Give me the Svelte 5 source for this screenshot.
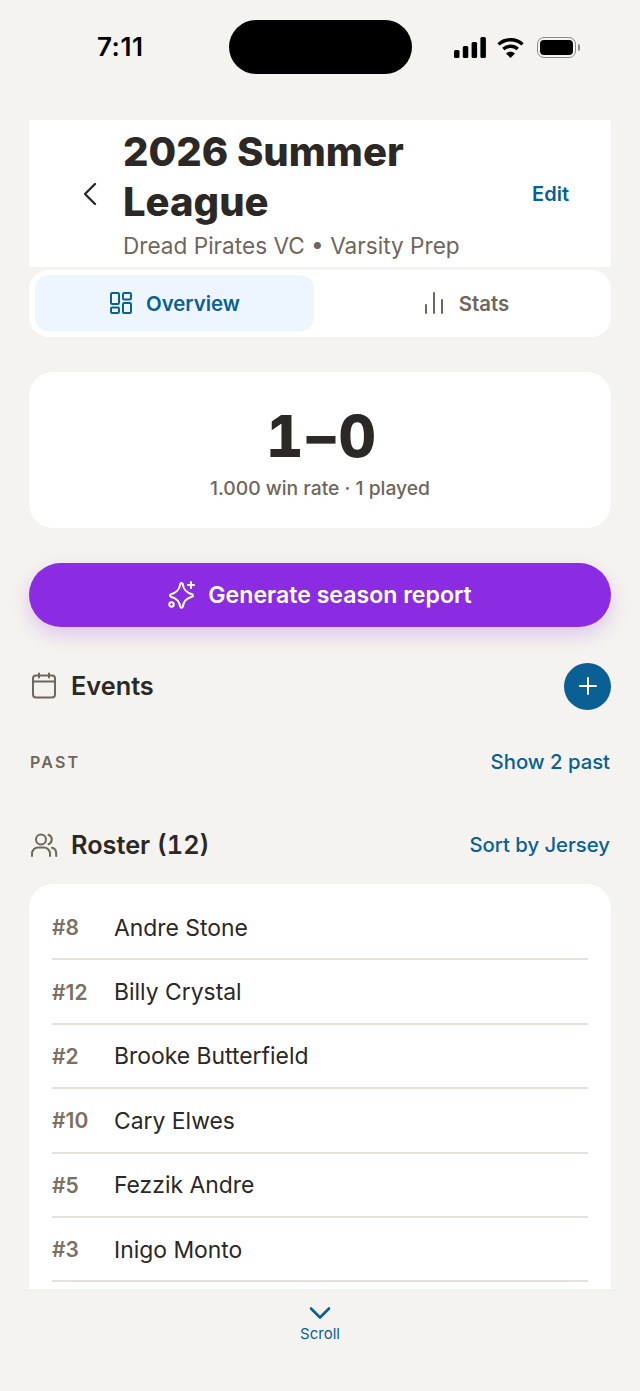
<script lang="ts">
  const roster = [
    { jersey: 8, name: "Andre Stone" },
    { jersey: 12, name: "Billy Crystal" },
    { jersey: 2, name: "Brooke Butterfield" },
    { jersey: 10, name: "Cary Elwes" },
    { jersey: 5, name: "Fezzik Andre" },
    { jersey: 3, name: "Inigo Monto" }
  ];
</script>

<div class="screen">
  <div class="status-bar">
    <span class="time">7:11</span>
    <div class="island"></div>
    <div class="status-icons">
      <svg width="32" height="21" viewBox="0 0 32 21" fill="#000">
        <rect x="0" y="13" width="5.500" height="8" rx="1.500" />
        <rect x="8.800" y="9" width="5.500" height="12" rx="1.500" />
        <rect x="17.600" y="5" width="5.500" height="16" rx="1.500" />
        <rect x="26.400" y="0" width="5.500" height="21" rx="1.500" />
      </svg>
      <svg class="wifi" width="27" height="21" viewBox="0 0 27 21" fill="none" stroke="#000" stroke-width="3.300">
        <path d="M1.500 7.400C8.200 1.200 18.800 1.200 25.500 7.400" />
        <path d="M6.300 12C10.400 8.300 16.600 8.300 20.700 12" />
        <path d="M13.500 21 9 16.400C11.600 14.200 15.400 14.200 18 16.400Z" fill="#000" stroke="none" />
      </svg>
      <div class="battery"><div class="battery-fill"></div></div>
      <div class="battery-cap"></div>
    </div>
  </div>

  <header class="header">
    <svg class="back" width="14" height="24" viewBox="0 0 14 24" fill="none" stroke="#2b2825" stroke-width="2.400" stroke-linecap="round" stroke-linejoin="round">
      <path d="M12 2 2 12l10 10" />
    </svg>
    <div class="header-text">
      <h1>2026 Summer League</h1>
      <p>Dread Pirates VC • Varsity Prep</p>
    </div>
    <span class="edit">Edit</span>
  </header>

  <div class="tabs">
    <div class="tab active">
      <svg width="24" height="24" viewBox="0 0 24 24" fill="none" stroke="currentColor" stroke-width="2" stroke-linejoin="round">
        <rect x="2" y="2" width="8" height="11" rx="1.200" />
        <rect x="14" y="2" width="8" height="6.500" rx="1.200" />
        <rect x="14" y="12" width="8" height="10" rx="1.200" />
        <rect x="2" y="16.500" width="8" height="5.500" rx="1.200" />
      </svg>
      <span>Overview</span>
    </div>
    <div class="tab">
      <svg width="24" height="24" viewBox="0 0 24 24" fill="none" stroke="currentColor" stroke-width="2" stroke-linecap="round">
        <path d="M4 14v8M12 2v20M20 9v13" />
      </svg>
      <span>Stats</span>
    </div>
  </div>

  <section class="score">
    <div class="record">1–0</div>
    <div class="record-sub">1.000 win rate · 1 played</div>
  </section>

  <button class="report" type="button">
    <svg width="28" height="28" viewBox="0 0 28 28" fill="none" stroke="#fff" stroke-width="2.100" stroke-linecap="round" stroke-linejoin="round">
      <path d="M12.300 3.100c.3-1.300 2.100-1.300 2.400 0 1 5.700 3.200 8.400 9.300 10.100 1.200.4 1.200 2.100 0 2.500-6.100 1.700-8.300 4.400-9.300 10.100-.3 1.300-2.100 1.300-2.400 0-1-5.700-3.200-8.400-9.300-10.100-1.200-.4-1.200-2.100 0-2.500 6.100-1.700 8.300-4.400 9.300-10.100Z" />
      <path d="M23 1v6M20 4h6" />
      <circle cx="3.500" cy="23.500" r="2.200" />
    </svg>
    <span>Generate season report</span>
  </button>

  <div class="section-row events">
    <div class="section-title">
      <svg width="28" height="28" viewBox="0 0 28 28" fill="none" stroke="#6f665c" stroke-width="2" stroke-linecap="round" stroke-linejoin="round">
        <rect x="3" y="3.500" width="22" height="22" rx="3" />
        <path d="M3 9.500h22M9 1.500v4M19 1.500v4" />
      </svg>
      <h2>Events</h2>
    </div>
    <button class="add" type="button" aria-label="Add event">
      <svg width="20" height="20" viewBox="0 0 20 20" fill="none" stroke="#fff" stroke-width="2" stroke-linecap="round">
        <path d="M10 2v16M2 10h16" />
      </svg>
    </button>
  </div>

  <div class="section-row past">
    <span class="past-label">PAST</span>
    <span class="link">Show 2 past</span>
  </div>

  <div class="section-row roster-head">
    <div class="section-title">
      <svg width="28" height="28" viewBox="0 0 28 28" fill="none" stroke="#6f665c" stroke-width="2" stroke-linecap="round" stroke-linejoin="round">
        <circle cx="11" cy="8.500" r="5" />
        <path d="M2 25v-2.500c0-3.500 3-6 6-6h6c3 0 6 2.500 6 6V25" />
        <path d="M18.500 3.800a5 5 0 0 1 0 9.400" />
        <path d="M22 16.800c2.500.6 4.200 3 4.200 5.700V25" />
      </svg>
      <h2>Roster (12)</h2>
    </div>
    <span class="link">Sort by Jersey</span>
  </div>

  <div class="roster">
    {#each roster as player}
      <div class="player">
        <span class="jersey">#{player.jersey}</span>
        <span class="name">{player.name}</span>
      </div>
    {/each}
  </div>

  <div class="scroll-hint">
    <svg width="22" height="14" viewBox="0 0 22 14" fill="none" stroke="#0a5f94" stroke-width="2.600" stroke-linecap="round" stroke-linejoin="round">
      <path d="M2 2.500 11 11.500 20 2.500" />
    </svg>
    <span>Scroll</span>
  </div>
</div>

<style>
  :global(body) {
    margin: 0;
    background: #f5f3ef;
  }

  .screen {
    box-sizing: border-box;
    width: 640px;
    height: 1391px;
    overflow: hidden;
    display: flex;
    flex-direction: column;
    background: #f5f3ef;
    color: #2b2825;
    font-family: Inter, "Liberation Sans", sans-serif;
  }

  .status-bar {
    flex: 0 0 120px;
    box-sizing: border-box;
    padding: 20px 0 0 97px;
    display: flex;
    align-items: flex-start;
  }

  .time {
    width: 132px;
    height: 54px;
    line-height: 54px;
    font-size: 26px;
    font-weight: 600;
    letter-spacing: 0.5px;
    color: #000;
  }

  .island {
    width: 183px;
    height: 54px;
    border-radius: 27px;
    background: #000;
  }

  .status-icons {
    margin-left: 42px;
    height: 54px;
    display: flex;
    align-items: center;
  }

  .wifi {
    margin-left: 11px;
  }

  .battery {
    box-sizing: border-box;
    margin-left: 13px;
    width: 39px;
    height: 21px;
    padding: 2px;
    border: 1.500px solid #8a8a8a;
    border-radius: 7px;
  }

  .battery-fill {
    height: 100%;
    background: #000;
    border-radius: 4px;
  }

  .battery-cap {
    width: 2px;
    height: 7px;
    margin-left: 2px;
    background: #8a8a8a;
    border-radius: 0 2px 2px 0;
  }

  .header {
    box-sizing: border-box;
    height: 147px;
    margin: 0 29px;
    padding-left: 54px;
    padding-right: 42px;
    background: #fff;
    display: flex;
    align-items: center;
    flex: 0 0 auto;
  }

  .back {
    flex: 0 0 auto;
    margin-right: 26px;
  }

  .header-text {
    flex: 1;
    min-width: 0;
  }

  h1 {
    margin: 0;
    width: 320px;
    font-size: 40px;
    line-height: 50px;
    font-weight: 800;
  }

  .header-text p {
    margin: 5px 0 0;
    font-size: 22.600px;
    line-height: 28px;
    color: #6f665c;
  }

  .edit {
    font-size: 20px;
    font-weight: 600;
    color: #0a5f94;
  }

  .tabs {
    box-sizing: border-box;
    height: 67px;
    margin: 3px 29px 0;
    padding: 5px 6px 6px;
    background: #fff;
    border-radius: 20px;
    display: flex;
    flex: 0 0 auto;
  }

  .tab {
    flex: 1;
    padding-left: 12px;
    display: flex;
    align-items: center;
    justify-content: center;
    gap: 13px;
    border-radius: 14px;
    font-size: 20.400px;
    font-weight: 600;
    color: #6f665c;
  }

  .tab.active {
    flex: 0 0 279px;
    padding-left: 0;
    background: #edf6fe;
    color: #0a5f94;
  }

  .score {
    box-sizing: border-box;
    height: 156px;
    margin: 35px 29px 0;
    padding-top: 30px;
    background: #fff;
    border-radius: 24px;
    text-align: center;
    flex: 0 0 auto;
  }

  .record {
    padding-left: 5px;
    font-size: 58px;
    line-height: 68px;
    font-weight: 800;
    font-variant-numeric: tabular-nums;
    letter-spacing: 3px;
  }

  .record-sub {
    margin-top: 6px;
    font-size: 19.300px;
    line-height: 24px;
    font-weight: 500;
    color: #6f665c;
  }

  .report {
    flex: 0 0 64px;
    margin: 35px 29px 0;
    border: 0;
    border-radius: 32px;
    background: #8b2be2;
    box-shadow: 0 8px 20px rgba(139, 43, 226, 0.22);
    color: #fff;
    display: flex;
    align-items: center;
    justify-content: center;
    gap: 12px;
    font: inherit;
    font-size: 23.100px;
    font-weight: 600;
  }

  .section-row {
    margin: 0 30px;
    display: flex;
    align-items: center;
    justify-content: space-between;
    flex: 0 0 auto;
  }

  .events {
    margin-top: 36px;
    margin-right: 29px;
    height: 46px;
  }

  .section-title {
    display: flex;
    align-items: center;
    gap: 13px;
  }

  h2 {
    margin: 0;
    padding-bottom: 2px;
    font-size: 25.300px;
    font-weight: 600;
    font-variant-numeric: tabular-nums;
  }

  .add {
    width: 47px;
    height: 47px;
    padding: 0;
    border: 0;
    border-radius: 50%;
    background: #0a5f94;
    display: flex;
    align-items: center;
    justify-content: center;
  }

  .past {
    margin-top: 31px;
    height: 44px;
  }

  .past-label {
    font-size: 16px;
    font-weight: 600;
    letter-spacing: 2.200px;
    color: #6f665c;
  }

  .link {
    padding-bottom: 2px;
    font-size: 20.300px;
    font-weight: 500;
    color: #0a5f94;
  }

  .roster-head {
    margin-top: 41px;
    height: 40px;
  }

  .roster {
    box-sizing: border-box;
    height: 405px;
    margin: 19px 29px 0;
    padding: 12px 23px 0;
    background: #fff;
    border-radius: 24px 24px 0 0;
    flex: 0 0 auto;
  }

  .player {
    box-sizing: border-box;
    height: 64.400px;
    padding-top: 1px;
    display: flex;
    align-items: center;
    border-bottom: 2px solid #e6e1da;
  }

  .jersey {
    width: 62px;
    font-size: 21px;
    font-weight: 600;
    color: #7a7065;
  }

  .name {
    font-size: 22.900px;
  }

  .scroll-hint {
    margin-top: 17px;
    display: flex;
    flex-direction: column;
    align-items: center;
    color: #0a5f94;
    font-size: 15px;
    gap: 4px;
  }
</style>
